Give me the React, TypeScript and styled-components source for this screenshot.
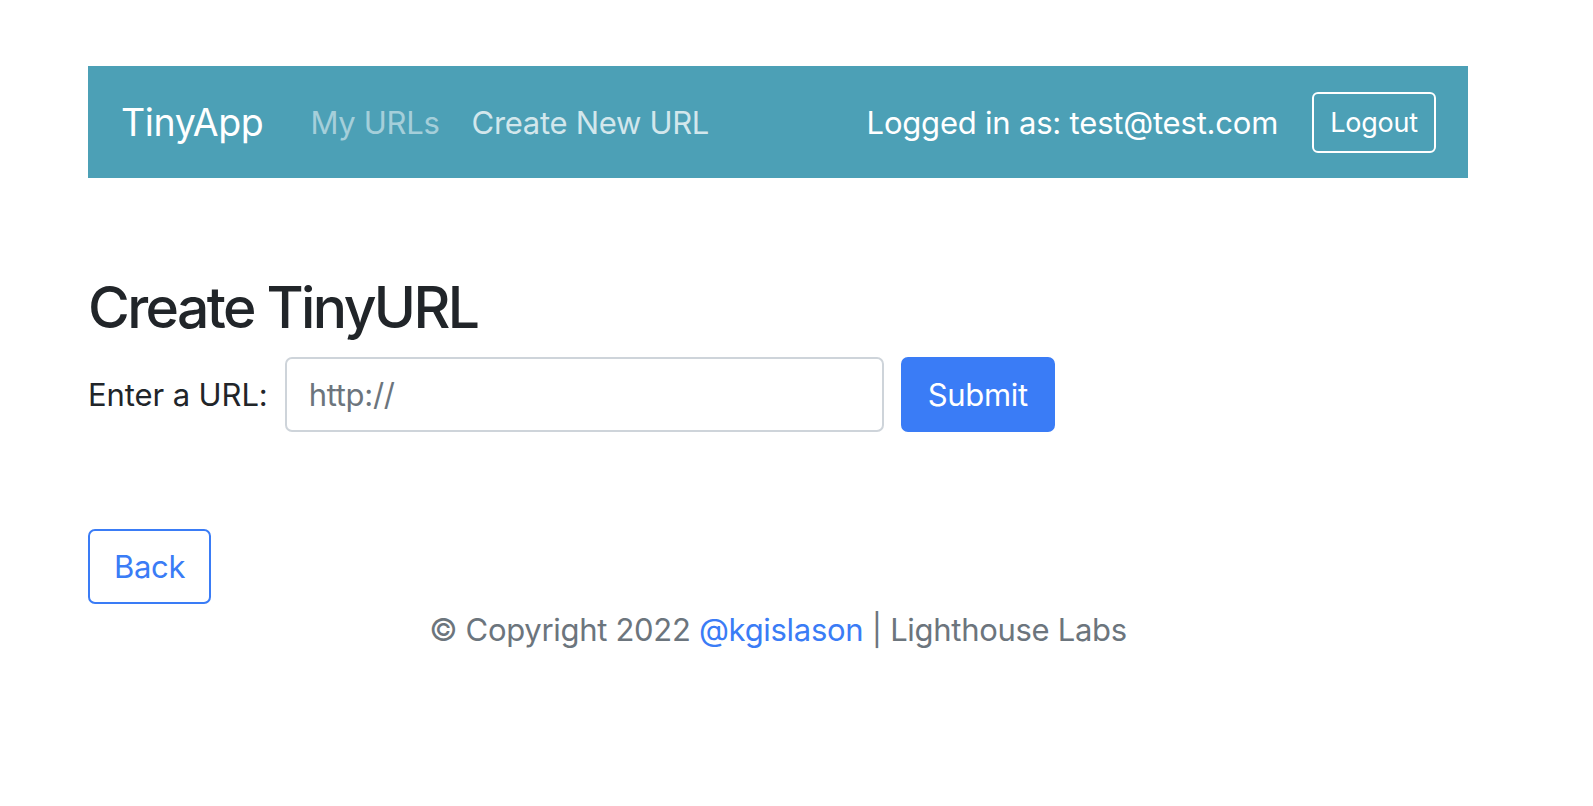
import React from "react";
import styled, { createGlobalStyle } from "styled-components";

const GlobalStyle = createGlobalStyle`
  html, body {
    margin: 0;
    padding: 0;
    background: #ffffff;
  }
  body {
    font-family: Inter, "Noto Sans", "Liberation Sans", sans-serif;
    color: #212529;
  }
  * { box-sizing: border-box; }
`;

const Page = styled.div`
  width: 1593px;
  min-height: 806px;
  padding: 66px 0 0 88px;
`;

const Container = styled.div`
  width: 1380px;
`;

const Navbar = styled.nav`
  height: 112px;
  background: #4ca0b6;
  display: flex;
  align-items: center;
  padding: 0 32px 0 33px;
`;

const Brand = styled.a`
  font-size: 37.5px;
  color: #ffffff;
  text-decoration: none;
  margin-right: 31px;
  letter-spacing: -0.4px;
`;

const NavLink = styled.a<{ $active?: boolean }>`
  font-size: 31px;
  padding: 0 16px;
  color: ${(p) => (p.$active ? "rgba(255,255,255,0.75)" : "rgba(255,255,255,0.5)")};
  text-decoration: none;
  letter-spacing: -0.3px;
`;

const Spacer = styled.div`
  flex: 1;
`;

const UserText = styled.span`
  font-size: 31px;
  color: #ffffff;
  margin-right: 34px;
  letter-spacing: -0.2px;
`;

const LogoutButton = styled.button`
  height: 61px;
  padding: 0 16px;
  background: transparent;
  border: 2px solid #ffffff;
  border-radius: 6px;
  color: #ffffff;
  font-family: inherit;
  font-size: 27px;
  letter-spacing: -0.2px;
`;

const Main = styled.main`
  padding-top: 96px;
`;

const Title = styled.h1`
  margin: 0 0 15px;
  font-size: 57px;
  font-weight: 500;
  line-height: 1.2;
  color: #212529;
  letter-spacing: -2.6px;
`;

const FormRow = styled.form`
  display: flex;
  align-items: center;
  gap: 17px;
`;

const Label = styled.label`
  font-size: 31px;
  color: #212529;
  letter-spacing: -0.1px;
`;

const UrlInput = styled.input`
  width: 599px;
  height: 75px;
  padding: 0 22px;
  border: 2px solid #ced4da;
  border-radius: 7px;
  font-family: inherit;
  font-size: 31px;
  color: #212529;
  letter-spacing: -0.3px;
  outline: none;
  &::placeholder {
    color: #6c757d;
  }
`;

const Button = styled.button<{ $outline?: boolean }>`
  height: 75px;
  padding: 0 ${(p) => (p.$outline ? "24px" : "25px")};
  border-radius: 7px;
  border: 2px solid #3a7cf6;
  background: ${(p) => (p.$outline ? "transparent" : "#3a7cf6")};
  color: ${(p) => (p.$outline ? "#3a7cf6" : "#ffffff")};
  font-family: inherit;
  font-size: 31px;
  letter-spacing: -0.3px;
`;

const BackRow = styled.div`
  margin-top: 97px;
`;

const Footer = styled.footer`
  text-align: center;
  font-size: 31px;
  line-height: 47px;
  color: #6c757d;
  margin-top: 2px;
  letter-spacing: -0.3px;
`;

const FooterLink = styled.a`
  color: #3a7cf6;
  text-decoration: none;
`;

export default function App() {
  return (
    <>
      <GlobalStyle />
      <Page>
        <Container>
          <Navbar>
            <Brand href="#">TinyApp</Brand>
            <NavLink href="#">My URLs</NavLink>
            <NavLink href="#" $active>
              Create New URL
            </NavLink>
            <Spacer />
            <UserText>Logged in as: test@test.com</UserText>
            <LogoutButton>Logout</LogoutButton>
          </Navbar>
          <Main>
            <Title>Create TinyURL</Title>
            <FormRow onSubmit={(e) => e.preventDefault()}>
              <Label htmlFor="longURL">Enter a URL:</Label>
              <UrlInput id="longURL" type="text" placeholder="http://" />
              <Button type="submit">Submit</Button>
            </FormRow>
            <BackRow>
              <Button $outline type="button">
                Back
              </Button>
            </BackRow>
            <Footer>
              © Copyright 2022 <FooterLink href="#">@kgislason</FooterLink> | Lighthouse Labs
            </Footer>
          </Main>
        </Container>
      </Page>
    </>
  );
}
